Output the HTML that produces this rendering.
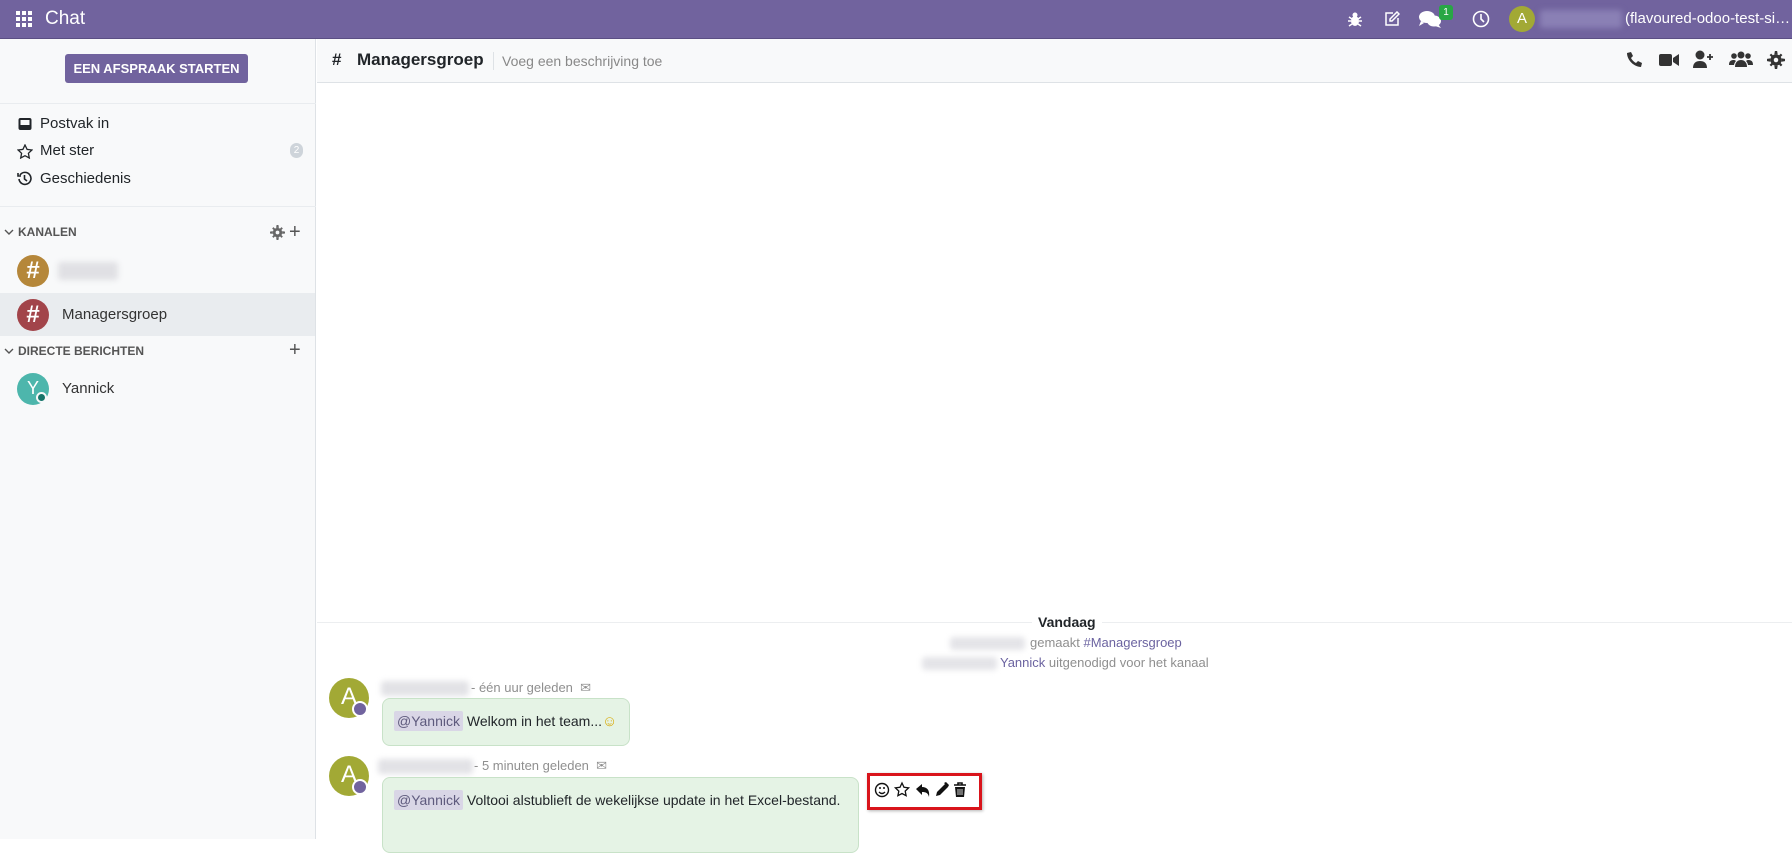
<!DOCTYPE html>
<html><head><meta charset="utf-8"><style>
*{box-sizing:border-box;margin:0;padding:0}
body{width:1792px;height:839px;overflow:hidden;font-family:"Liberation Sans",sans-serif;font-size:15px;color:#212529;background:#fff;position:relative}
.abs{position:absolute}
.top{left:0;top:0;width:1792px;height:39px;background:#71639e;border-bottom:1px solid #5b4f84;color:#fff}
.side{left:0;top:39px;width:316px;height:800px;background:#f8f9fa;border-right:1px solid #dee2e6}
.blur{background:#d8d8de;filter:blur(3px);border-radius:3px}
.hdr{left:317px;top:39px;width:1475px;height:44px;background:#f8f9fa;border-bottom:1px solid #dee2e6}
.av{border-radius:50%;color:#fff;text-align:center}
.bub{background:#e5f3e5;border:1px solid #c8e2c8;border-radius:8px;font-size:14px}
.men{background:#d9d6e6;color:#5e5a7d;padding:2px 3px;border-radius:2px}
.meta{color:#8f8f8f;font-size:13px}
</style></head><body>
<div class="abs top">
 <svg class="abs" style="left:16px;top:11px" width="16" height="16" viewBox="0 0 16 16" fill="#fff"><rect x="0" y="0" width="4" height="4"/><rect x="6" y="0" width="4" height="4"/><rect x="12" y="0" width="4" height="4"/><rect x="0" y="6" width="4" height="4"/><rect x="6" y="6" width="4" height="4"/><rect x="12" y="6" width="4" height="4"/><rect x="0" y="12" width="4" height="4"/><rect x="6" y="12" width="4" height="4"/><rect x="12" y="12" width="4" height="4"/></svg>
 <div class="abs" style="left:45px;top:8px;font-size:19px">Chat</div>
 <svg class="abs" style="left:1348px;top:11px" width="14" height="16" viewBox="0 0 14 16" fill="#fff"><ellipse cx="7" cy="10" rx="4" ry="5"/><circle cx="7" cy="4" r="2.5"/><path d="M1 6l3 2M13 6l-3 2M0 10h3M14 10h-3M1 15l3-2M13 15l-3-2" stroke="#fff" stroke-width="1.5"/></svg>
 <svg class="abs" style="left:1384px;top:11px" width="16" height="16" viewBox="0 0 16 16" fill="none" stroke="#fff" stroke-width="1.5"><path d="M9 2H2v12h12V7"/><path d="M13 1l2 2-7 7H6V8z"/></svg>
 <svg class="abs" style="left:1418px;top:10px" width="24" height="18" viewBox="0 0 24 18" fill="#fff"><ellipse cx="9" cy="7" rx="8" ry="6"/><ellipse cx="16" cy="11" rx="7" ry="5.5"/><path d="M3 11l-2 5 5-3zM20 14l3 4-6-2z"/></svg>
 <div class="abs" style="left:1439px;top:5px;width:14px;height:15px;background:#28a745;border-radius:3px;font-size:10px;text-align:center;line-height:15px">1</div>
 <svg class="abs" style="left:1472px;top:10px" width="18" height="18" viewBox="0 0 18 18" fill="none" stroke="#fff" stroke-width="1.6"><circle cx="9" cy="9" r="7.5"/><path d="M9 4v5l3 3"/></svg>
 <div class="abs av" style="left:1509px;top:6px;width:26px;height:26px;background:#a2a935;line-height:26px;font-size:15px">A</div>
 <div class="abs blur" style="left:1540px;top:10px;width:82px;height:18px;background:#8a80b5"></div>
 <div class="abs" style="left:1625px;top:10px;font-size:15px;white-space:nowrap">(flavoured-odoo-test-si…</div>
</div>
<div class="abs side">
 <div class="abs" style="left:65px;top:15px;width:183px;height:29px;background:#71639e;color:#fff;border-radius:3px;font-size:13px;font-weight:bold;text-align:center;line-height:29px">EEN AFSPRAAK STARTEN</div>
 <div class="abs" style="left:0;top:64px;width:316px;border-top:1px solid #e9ecef"></div>
 <svg class="abs" style="left:18px;top:78px" width="14" height="14" viewBox="0 0 14 14"><rect x="0.5" y="1" width="13" height="12" rx="2" fill="#212529"/><rect x="2.5" y="3" width="9" height="5" fill="#f8f9fa"/></svg>
 <div class="abs" style="left:40px;top:76px">Postvak in</div>
 <svg class="abs" style="left:17px;top:105px" width="16" height="15" viewBox="0 0 16 15" fill="none" stroke="#212529" stroke-width="1.3"><path d="M8 1l2.1 4.4 4.8.6-3.5 3.3.9 4.7L8 11.7 3.7 14l.9-4.7L1.1 6l4.8-.6z"/></svg>
 <div class="abs" style="left:40px;top:103px">Met ster</div>
 <div class="abs" style="left:290px;top:104px;width:13px;height:15px;border-radius:7px;background:#ced4da;color:#fff;font-size:10px;text-align:center;line-height:15px">2</div>
 <svg class="abs" style="left:17px;top:132px" width="15" height="15" viewBox="0 0 15 15" fill="none" stroke="#212529" stroke-width="1.6"><path d="M3 4a6 6 0 1 1-1 4"/><path d="M1 2v3h3" /><path d="M7.5 4v4l2.5 2"/></svg>
 <div class="abs" style="left:40px;top:131px">Geschiedenis</div>
 <div class="abs" style="left:0;top:167px;width:316px;border-top:1px solid #e9ecef"></div>
 <svg class="abs" style="left:4px;top:189px" width="10" height="8" viewBox="0 0 10 8" fill="none" stroke="#555" stroke-width="1.4"><path d="M1 2l4 4 4-4"/></svg>
 <div class="abs" style="left:18px;top:186px;font-size:12px;font-weight:bold;color:#555">KANALEN</div>
 <svg class="abs" style="left:270px;top:186px" width="15" height="15" viewBox="0 0 16 16" fill="#666"><circle cx="8" cy="8" r="5"/><path d="M7 0h2l.5 3h-3zM7 16h2l.5-3h-3zM0 7v2l3 .5v-3zM16 7v2l-3 .5v-3zM2.3 3.7l1.4-1.4 2 2-1.4 1.4zM13.7 12.3l-1.4 1.4-2-2 1.4-1.4zM3.7 13.7l-1.4-1.4 2-2 1.4 1.4zM12.3 2.3l1.4 1.4-2 2-1.4-1.4z"/><circle cx="8" cy="8" r="2" fill="#f8f9fa"/></svg>
 <div class="abs" style="left:289px;top:182px;font-size:20px;color:#555">+</div>
 <div class="abs av" style="left:17px;top:216px;width:32px;height:32px;background:#b5873a;font-size:24px;line-height:32px;font-weight:bold">#</div>
 <div class="abs blur" style="left:58px;top:223px;width:60px;height:18px;background:#e0e0e4"></div>
 <div class="abs" style="left:0;top:254px;width:315px;height:43px;background:#e9ecef"></div>
 <div class="abs av" style="left:17px;top:260px;width:32px;height:32px;background:#a2444a;font-size:24px;line-height:32px;font-weight:bold">#</div>
 <div class="abs" style="left:62px;top:267px;color:#333">Managersgroep</div>
 <svg class="abs" style="left:4px;top:308px" width="10" height="8" viewBox="0 0 10 8" fill="none" stroke="#555" stroke-width="1.4"><path d="M1 2l4 4 4-4"/></svg>
 <div class="abs" style="left:18px;top:305px;font-size:12px;font-weight:bold;color:#555">DIRECTE BERICHTEN</div>
 <div class="abs" style="left:289px;top:300px;font-size:20px;color:#555">+</div>
 <div class="abs av" style="left:17px;top:334px;width:32px;height:32px;background:#4db6ac;font-size:18px;line-height:30px">Y</div>
 <div class="abs" style="left:36px;top:353px;width:11px;height:11px;border-radius:50%;background:#17756a;border:2px solid #f8f9fa"></div>
 <div class="abs" style="left:62px;top:341px;color:#333">Yannick</div>
</div>
<div class="abs hdr">
 <div class="abs" style="left:15px;top:11px;font-size:17px;font-weight:bold">#</div>
 <div class="abs" style="left:40px;top:11px;font-size:17px;font-weight:bold">Managersgroep</div>
 <div class="abs" style="left:176px;top:13px;height:18px;border-left:1px solid #dee2e6"></div>
 <div class="abs" style="left:185px;top:14px;font-size:14px;color:#888">Voeg een beschrijving toe</div>
 <svg class="abs" style="left:1308px;top:12px" width="18" height="18" viewBox="0 0 18 18" fill="#333"><path d="M2 2l4-1 2 4-2 2c1 2 3 4 5 5l2-2 4 2-1 4C9 16 2 9 2 2z"/></svg>
 <svg class="abs" style="left:1342px;top:14px" width="20" height="14" viewBox="0 0 20 14" fill="#333"><rect x="0" y="1" width="13" height="12" rx="2"/><path d="M14 5l6-4v12l-6-4z"/></svg>
 <svg class="abs" style="left:1376px;top:11px" width="22" height="18" viewBox="0 0 22 18" fill="#333"><circle cx="7" cy="5" r="4.5"/><path d="M0 18c0-5 3-7 7-7s7 2 7 7z"/><path d="M17 4v6M14 7h6" stroke="#333" stroke-width="1.8"/></svg>
 <svg class="abs" style="left:1412px;top:11px" width="24" height="18" viewBox="0 0 24 18" fill="#333"><circle cx="12" cy="5" r="3.5"/><circle cx="5" cy="6" r="2.8"/><circle cx="19" cy="6" r="2.8"/><path d="M6 17c0-5 3-7 6-7s6 2 6 7z"/><path d="M0 15c0-4 2-5 5-5 1 0 2 1 2 1-1 1-2 3-2 4zM24 15c0-4-2-5-5-5-1 0-2 1-2 1 1 1 2 3 2 4z"/></svg>
 <svg class="abs" style="left:1450px;top:12px" width="18" height="18" viewBox="0 0 16 16" fill="#333"><circle cx="8" cy="8" r="5"/><path d="M7 0h2l.5 3h-3zM7 16h2l.5-3h-3zM0 7v2l3 .5v-3zM16 7v2l-3 .5v-3zM2.3 3.7l1.4-1.4 2 2-1.4 1.4zM13.7 12.3l-1.4 1.4-2-2 1.4-1.4zM3.7 13.7l-1.4-1.4 2-2 1.4 1.4zM12.3 2.3l1.4 1.4-2 2-1.4-1.4z"/><circle cx="8" cy="8" r="2" fill="#f8f9fa"/></svg>
</div>
<div class="abs" style="left:317px;top:622px;width:1475px;border-top:1px solid #eceef0"></div>
<div class="abs" style="left:1032px;top:614px;background:#fff;padding:0 6px;font-weight:bold;font-size:14px">Vandaag</div>
<div class="abs blur" style="left:950px;top:637px;width:75px;height:13px;background:#e4e4e8"></div>
<div class="abs meta" style="left:1030px;top:635px">gemaakt <span style="color:#6b63a0">#Managersgroep</span></div>
<div class="abs blur" style="left:922px;top:657px;width:75px;height:13px;background:#e4e4e8"></div>
<div class="abs meta" style="left:1000px;top:655px"><span style="color:#6b63a0">Yannick</span> uitgenodigd voor het kanaal</div>

<div class="abs av" style="left:329px;top:678px;width:40px;height:40px;background:#a2a935;font-size:24px;line-height:38px">A</div>
<div class="abs" style="left:352px;top:701px;width:16px;height:16px;border-radius:50%;background:#71639e;border:2px solid #fff"></div>
<div class="abs blur" style="left:381px;top:681px;width:88px;height:15px;background:#e2e2e6"></div>
<div class="abs meta" style="left:471px;top:680px">- één uur geleden &nbsp;✉</div>
<div class="abs bub" style="left:382px;top:698px;width:248px;height:48px"><div style="position:absolute;left:11px;top:14px;white-space:nowrap"><span class="men">@Yannick</span> Welkom in het team...<span style="color:#d9ad10;font-size:15px">☺</span></div></div>

<div class="abs av" style="left:329px;top:756px;width:40px;height:40px;background:#a2a935;font-size:24px;line-height:38px">A</div>
<div class="abs" style="left:352px;top:779px;width:16px;height:16px;border-radius:50%;background:#71639e;border:2px solid #fff"></div>
<div class="abs blur" style="left:378px;top:759px;width:95px;height:15px;background:#e2e2e6"></div>
<div class="abs meta" style="left:474px;top:758px">- 5 minuten geleden &nbsp;✉</div>
<div class="abs bub" style="left:382px;top:777px;width:477px;height:76px"><div style="position:absolute;left:11px;top:14px;white-space:nowrap"><span class="men">@Yannick</span> Voltooi alstublieft de wekelijkse update in het Excel-bestand.</div></div>
<div class="abs" style="left:867px;top:773px;width:115px;height:37px;border:3px solid #d9141b;background:#fff;box-shadow:1px 1px 3px rgba(0,0,0,.3)"></div>
<svg class="abs" style="left:874px;top:781px" width="100" height="18" viewBox="0 0 100 18">
 <g fill="none" stroke="#111" stroke-width="1.4"><circle cx="8" cy="9" r="6.5"/><path d="M5 11q3 3 6 0"/></g><circle cx="6" cy="7" r="1" fill="#111"/><circle cx="10" cy="7" r="1" fill="#111"/>
 <path d="M28 2l2 4.3 4.6.6-3.4 3.2.9 4.6L28 12.5l-4.1 2.2.9-4.6-3.4-3.2 4.6-.6z" fill="none" stroke="#111" stroke-width="1.3"/>
 <path d="M42 8l6-5v3c5 0 8 3 7 10-1-4-3-5-7-5v3z" fill="#111"/>
 <path d="M62 15l1-4 8-8 3 3-8 8zM70 2l2-1 3 3-1 2z" fill="#111"/>
 <path d="M80 4h12M84 4V2h4v2" stroke="#111" stroke-width="1.6" fill="none"/><path d="M81 6h10l-1 10h-8z" fill="#111"/><path d="M84 8v6M86 8v6M88 8v6" stroke="#fff" stroke-width="0.8"/>
</svg>
</body></html>
